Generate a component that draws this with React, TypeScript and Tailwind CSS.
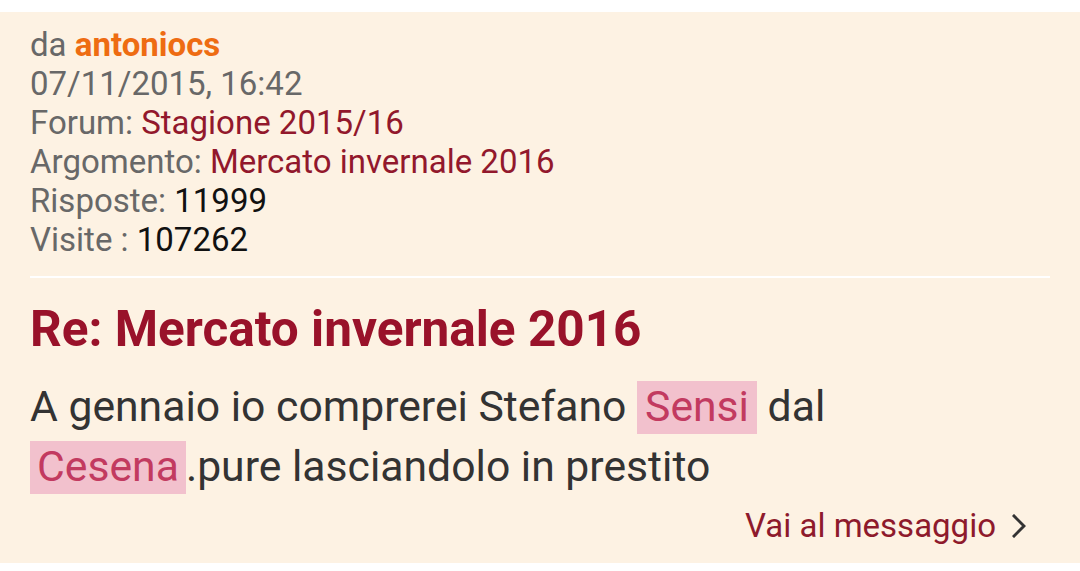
import React from "react";

export default function App() {
  return (
    <div className="w-[1080px] h-[571px] bg-white overflow-hidden" style={{ fontFamily: "Roboto, 'Noto Sans', sans-serif" }}>
      <div className="mt-[12px] bg-[#fdf2e3] pt-[13px] pb-[17px] px-[30px]">
        <div className="text-[33px] leading-[39px] text-[#686868]">
          <div>
            da <span className="font-bold text-[#ee6c12]">antoniocs</span>
          </div>
          <div>07/11/2015, 16:42</div>
          <div>
            Forum: <span className="text-[#92182c]">Stagione 2015/16</span>
          </div>
          <div>
            Argomento: <span className="text-[#92182c]">Mercato invernale 2016</span>
          </div>
          <div>
            Risposte: <span className="text-[#111111]">11999</span>
          </div>
          <div>
            Visite : <span className="text-[#111111]">107262</span>
          </div>
        </div>
        <div className="mt-[17px] h-[2px] bg-white" />
        <h1 className="mt-[21px] text-[49.5px] leading-[60px] font-bold text-[#99122a]">
          Re: Mercato invernale 2016
        </h1>
        <p className="mt-[17px] text-[42.7px] leading-[60px] text-[#333333]">
          A gennaio io comprerei Stefano{" "}
          <span className="bg-[#f2c1cd] text-[#c23a60] px-[8px] pb-[3px]">Sensi</span> dal{" "}
          <span className="bg-[#f2c1cd] text-[#c23a60] px-[7px] pb-[3px]">Cesena</span>.pure lasciandolo in prestito
        </p>
        <div className="mt-[10px] flex justify-end items-center pr-[24px] text-[33px] leading-[40px] text-[#8e1a2c]">
          <span>Vai al messaggio</span>
          <svg className="ml-[16px]" width="14" height="24" viewBox="0 0 14 24" fill="none">
            <path d="M2 2 L12 12 L2 22" stroke="#333333" strokeWidth="3" strokeLinecap="square" strokeLinejoin="miter" />
          </svg>
        </div>
      </div>
    </div>
  );
}
